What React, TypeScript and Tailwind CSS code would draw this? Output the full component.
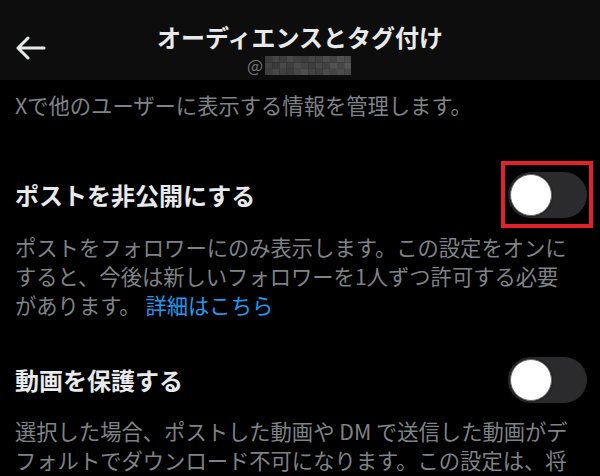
const mosaic = [
  ['#3b3b3c', '#454546', '#3e3e3f', '#4a4a4b', '#404041', '#3c3c3d', '#464647', '#414142', '#4d4d4e', '#434344', '#505051', '#4a4a4b'],
  ['#424243', '#3a3a3b', '#48484a', '#3f3f40', '#4b4b4c', '#444445', '#3d3d3e', '#49494a', '#424243', '#525253', '#474748', '#555556'],
  ['#3e3e3f', '#474748', '#404041', '#3b3b3c', '#454546', '#4e4e4f', '#434344', '#3f3f40', '#4a4a4b', '#454546', '#4c4c4d', '#48484a'],
];

function Toggle() {
  return (
    <div className="w-[79px] h-[46px] rounded-full bg-[#2b2b2d] flex items-center">
      <div className="w-[42px] h-[42px] ml-[2px] rounded-full bg-white border border-[#6b6b6b] shadow-[0_0_2px_rgba(0,0,0,0.8)]" />
    </div>
  );
}

export default function App() {
  return (
    <div className="w-[600px] h-[476px] overflow-hidden bg-black font-['Noto_Sans_CJK_JP',sans-serif]">
      {/* Header */}
      <div className="relative h-[80px] bg-[#0d0d0d] flex flex-col items-center pt-[22px]">
        <button className="absolute left-[16px] top-[36px]">
          <svg width="30" height="24" viewBox="0 0 30 24" fill="none">
            <path
              d="M2 12 H28 M12 2 L2 12 L12 22"
              stroke="#e7e9ea"
              strokeWidth="3"
              strokeLinecap="round"
              strokeLinejoin="round"
            />
          </svg>
        </button>
        <h1 className="text-[24px] leading-[29px] font-bold text-[#e7e9ea]">
          オーディエンスとタグ付け
        </h1>
        <div className="flex items-center h-[22px] mt-[3px] pr-[2px]">
          <span className="text-[17px] leading-[20px] text-[#71767b]">@</span>
          <svg width="86" height="19" viewBox="0 0 86 19" className="ml-[2px]">
            {mosaic.map((row, r) =>
              row.map((c, i) => (
                <rect key={`${r}-${i}`} x={i * 7.2} y={r * 6.4} width="7.3" height="6.5" fill={c} />
              ))
            )}
          </svg>
        </div>
      </div>

      {/* Body */}
      <div className="pl-[15px] pr-[13px] pt-[10px]">
        <p className="text-[21.3px] leading-[29px] text-[#7f8387]">
          Xで他のユーザーに表示する情報を管理します。
        </p>

        {/* Protect posts */}
        <div className="mt-[53px] flex items-center justify-between">
          <span className="text-[24px] leading-[30px] font-bold text-[#e7e9ea]">
            ポストを非公開にする
          </span>
          <div className="relative">
            <Toggle />
            <span className="absolute -left-[7px] -right-[6px] -top-[11px] -bottom-[10px] border-4 border-[#e3212b]" />
          </div>
        </div>
        <p className="mt-[14px] text-[21.3px] leading-[29px] text-[#7f8387] whitespace-nowrap">
          ポストをフォロワーにのみ表示します。この設定をオンに
          <br />
          すると、今後は新しいフォロワーを1人ずつ許可する必要
          <br />
          があります。 <span className="text-[#1d9bf0]">詳細はこちら</span>
        </p>

        {/* Protect videos */}
        <div className="mt-[38px] flex items-center justify-between">
          <span className="text-[24px] leading-[30px] font-bold text-[#e7e9ea]">
            動画を保護する
          </span>
          <Toggle />
        </div>
        <p className="mt-[13px] text-[21.3px] leading-[29px] text-[#7f8387] whitespace-nowrap">
          選択した場合、ポストした動画や DM で送信した動画がデ
          <br />
          フォルトでダウンロード不可になります。この設定は、将
        </p>
      </div>
    </div>
  );
}
